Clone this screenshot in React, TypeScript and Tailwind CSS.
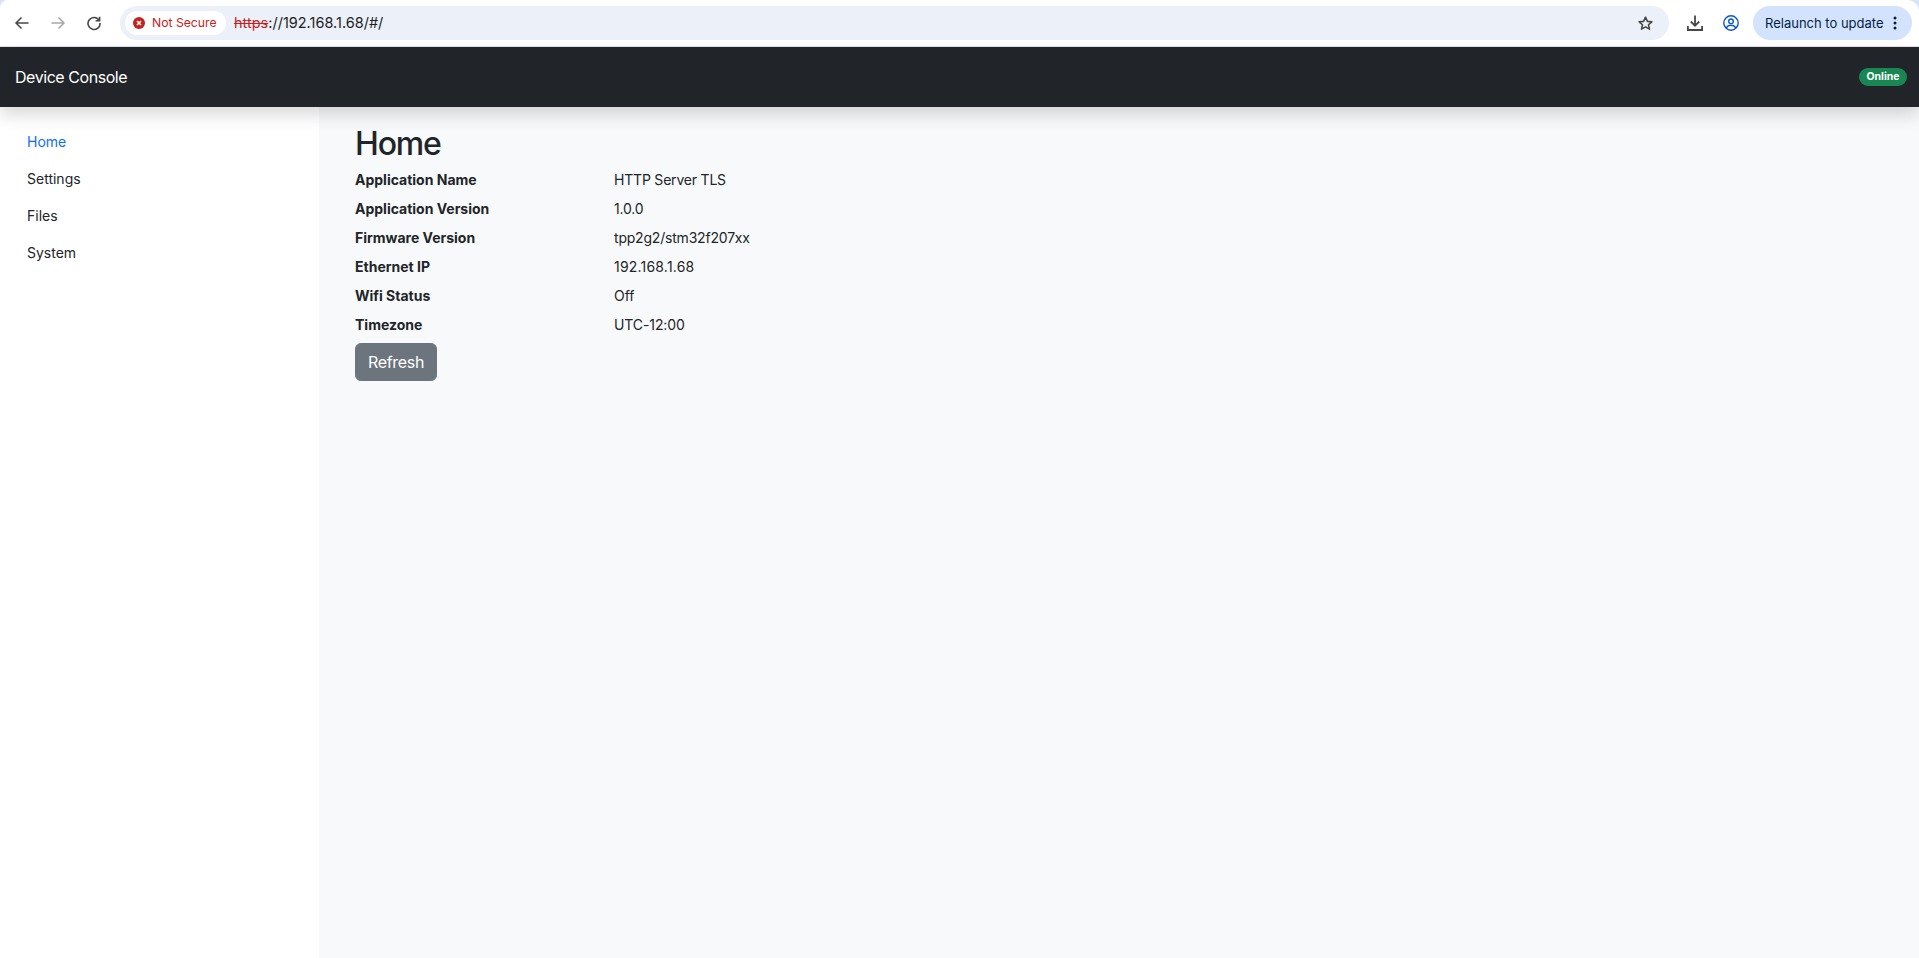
import React from "react";

function Rows() {
  const rows: [string, string, string][] = [
    ["Application Name", "HTTP Server TLS", "tracking-[-0.2px]"],
    ["Application Version", "1.0.0", "tracking-[-0.2px]"],
    ["Firmware Version", "tpp2g2/stm32f207xx", "tracking-[-0.2px]"],
    ["Ethernet IP", "192.168.1.68", "tracking-[0.2px]"],
    ["Wifi Status", "Off", "tracking-[0px]"],
    ["Timezone", "UTC-12:00", "tracking-[-0.1px]"],
  ];
  return (
    <div className="flex flex-col">
      {rows.map(([k, v, t]) => (
        <div key={k} className="flex h-[29px] items-center text-[14px] text-[#212529]">
          <div className="w-[259px] font-bold">{k}</div>
          <div className={t}>{v}</div>
        </div>
      ))}
    </div>
  );
}

export default function App() {
  return (
    <div className="flex h-[958px] flex-col overflow-hidden bg-white font-['Inter','Liberation_Sans',sans-serif]">
      <div className="h-[47px] shrink-0 bg-[#d6e4fb]">
        <div className="flex h-[47px] items-center rounded-tl-[8px] rounded-tr-[12px] border-b border-[#e3e3e3] bg-white pr-[7px]">
          <div className="flex w-[120px] shrink-0 items-center gap-[20px] pl-[14px]">
            <svg width="16" height="16" viewBox="0 0 16 16" fill="none" stroke="#474747" strokeWidth="1.5"><path d="M14.5 8H2M7.5 2.5 2 8l5.5 5.5" /></svg>
            <svg width="16" height="16" viewBox="0 0 16 16" fill="none" stroke="#a8a8a8" strokeWidth="1.5"><path d="M1.5 8H14M8.5 2.5 14 8l-5.5 5.5" /></svg>
            <svg width="16" height="16" viewBox="0 0 16 16" fill="none" stroke="#474747" strokeWidth="1.6"><path d="M13.2 5.5A6 6 0 1 0 14 8M13.6 1.8v4h-4" /></svg>
          </div>
          <div className="flex h-[34px] flex-1 items-center rounded-full bg-[#ebf0f9] pl-[5px] pr-[15px]">
            <div className="flex h-[24px] w-[101px] items-center gap-[7px] rounded-full bg-white pl-[8px] text-[12.2px] text-[#c5221f]">
              <svg width="12" height="12" viewBox="0 0 13 13"><circle cx="6.5" cy="6.5" r="6.5" fill="#c5221f" /><path d="M4.3 4.3l4.4 4.4M8.7 4.3l-4.4 4.4" stroke="#fff" strokeWidth="1.6" /></svg>
              <span className="pt-[1px]">Not Secure</span>
            </div>
            <div className="ml-[8px] text-[14.5px] text-[#1f1f1f]">
              <span className="text-[#c5221f] line-through">https</span>://192.168.1.68/#/
            </div>
            <div className="flex-1" />
            <svg width="17" height="17" viewBox="0 0 24 24" fill="none" stroke="#474747" strokeWidth="2.2" strokeLinejoin="round"><path d="M12 3l2.7 6 6.3.6-4.8 4.2 1.5 6.2L12 16.8 6.3 20l1.5-6.2L3 9.6 9.3 9z" /></svg>
          </div>
          <div className="flex w-[84px] shrink-0 items-center gap-[20px] pl-[18px]">
            <svg width="16" height="16" viewBox="0 0 16 16" fill="none" stroke="#474747" strokeWidth="1.8"><path d="M8 0.5V10.5M3.8 6.5 8 10.8l4.2-4.3M0.9 11v4h14.2v-4" /></svg>
            <svg width="16" height="16" viewBox="0 0 16 16" fill="none" stroke="#0b57d0" strokeWidth="1.4"><circle cx="8" cy="8" r="7.2" /><circle cx="8" cy="6.3" r="2.3" /><path d="M3.3 13c1-2 2.6-2.7 4.7-2.7s3.7.7 4.7 2.7" /></svg>
          </div>
          <div className="flex h-[34px] w-[159px] shrink-0 items-center rounded-full bg-[#d3e3fd] pl-[12px] text-[13px] text-[#041e49]">
            <span className="pt-[1px]">Relaunch to update</span>
            <svg className="ml-[9px]" width="4" height="14" viewBox="0 0 4 14" fill="#041e49"><circle cx="2" cy="2" r="1.5" /><circle cx="2" cy="7" r="1.5" /><circle cx="2" cy="12" r="1.5" /></svg>
          </div>
        </div>
      </div>
      <div className="relative z-10 flex h-[60px] shrink-0 items-center justify-between bg-[#212529] pl-[15px] pr-[12px] shadow-[0_8px_16px_rgba(0,0,0,0.15)]">
        <span className="text-[16px] tracking-[-0.45px] text-white">Device Console</span>
        <span className="flex h-[18px] w-[48px] items-center justify-center rounded-full bg-[#198754] text-[10.5px] font-bold text-white">Online</span>
      </div>
      <div className="flex flex-1">
        <div className="w-[319px] shrink-0 bg-white pl-[27px] pt-[16px] text-[14px] text-[#212529]">
          <div className="flex h-[37px] items-center text-[#0d6efd]">Home</div>
          <div className="flex h-[37px] items-center">Settings</div>
          <div className="flex h-[37px] items-center">Files</div>
          <div className="flex h-[37px] items-center">System</div>
        </div>
        <div className="flex-1 bg-[#f8f9fa] pl-[36px] pt-[18px]">
          <h2 className="mb-[2px] text-[32px] leading-[38px] font-medium tracking-[-1.2px] text-[#212529]">Home</h2>
          <Rows />
          <button className="mt-[4px] h-[38px] w-[82px] rounded-[6px] border border-[#6c757d] bg-[#6c757d] text-[16px] tracking-[-0.3px] text-white">Refresh</button>
        </div>
      </div>
    </div>
  );
}
